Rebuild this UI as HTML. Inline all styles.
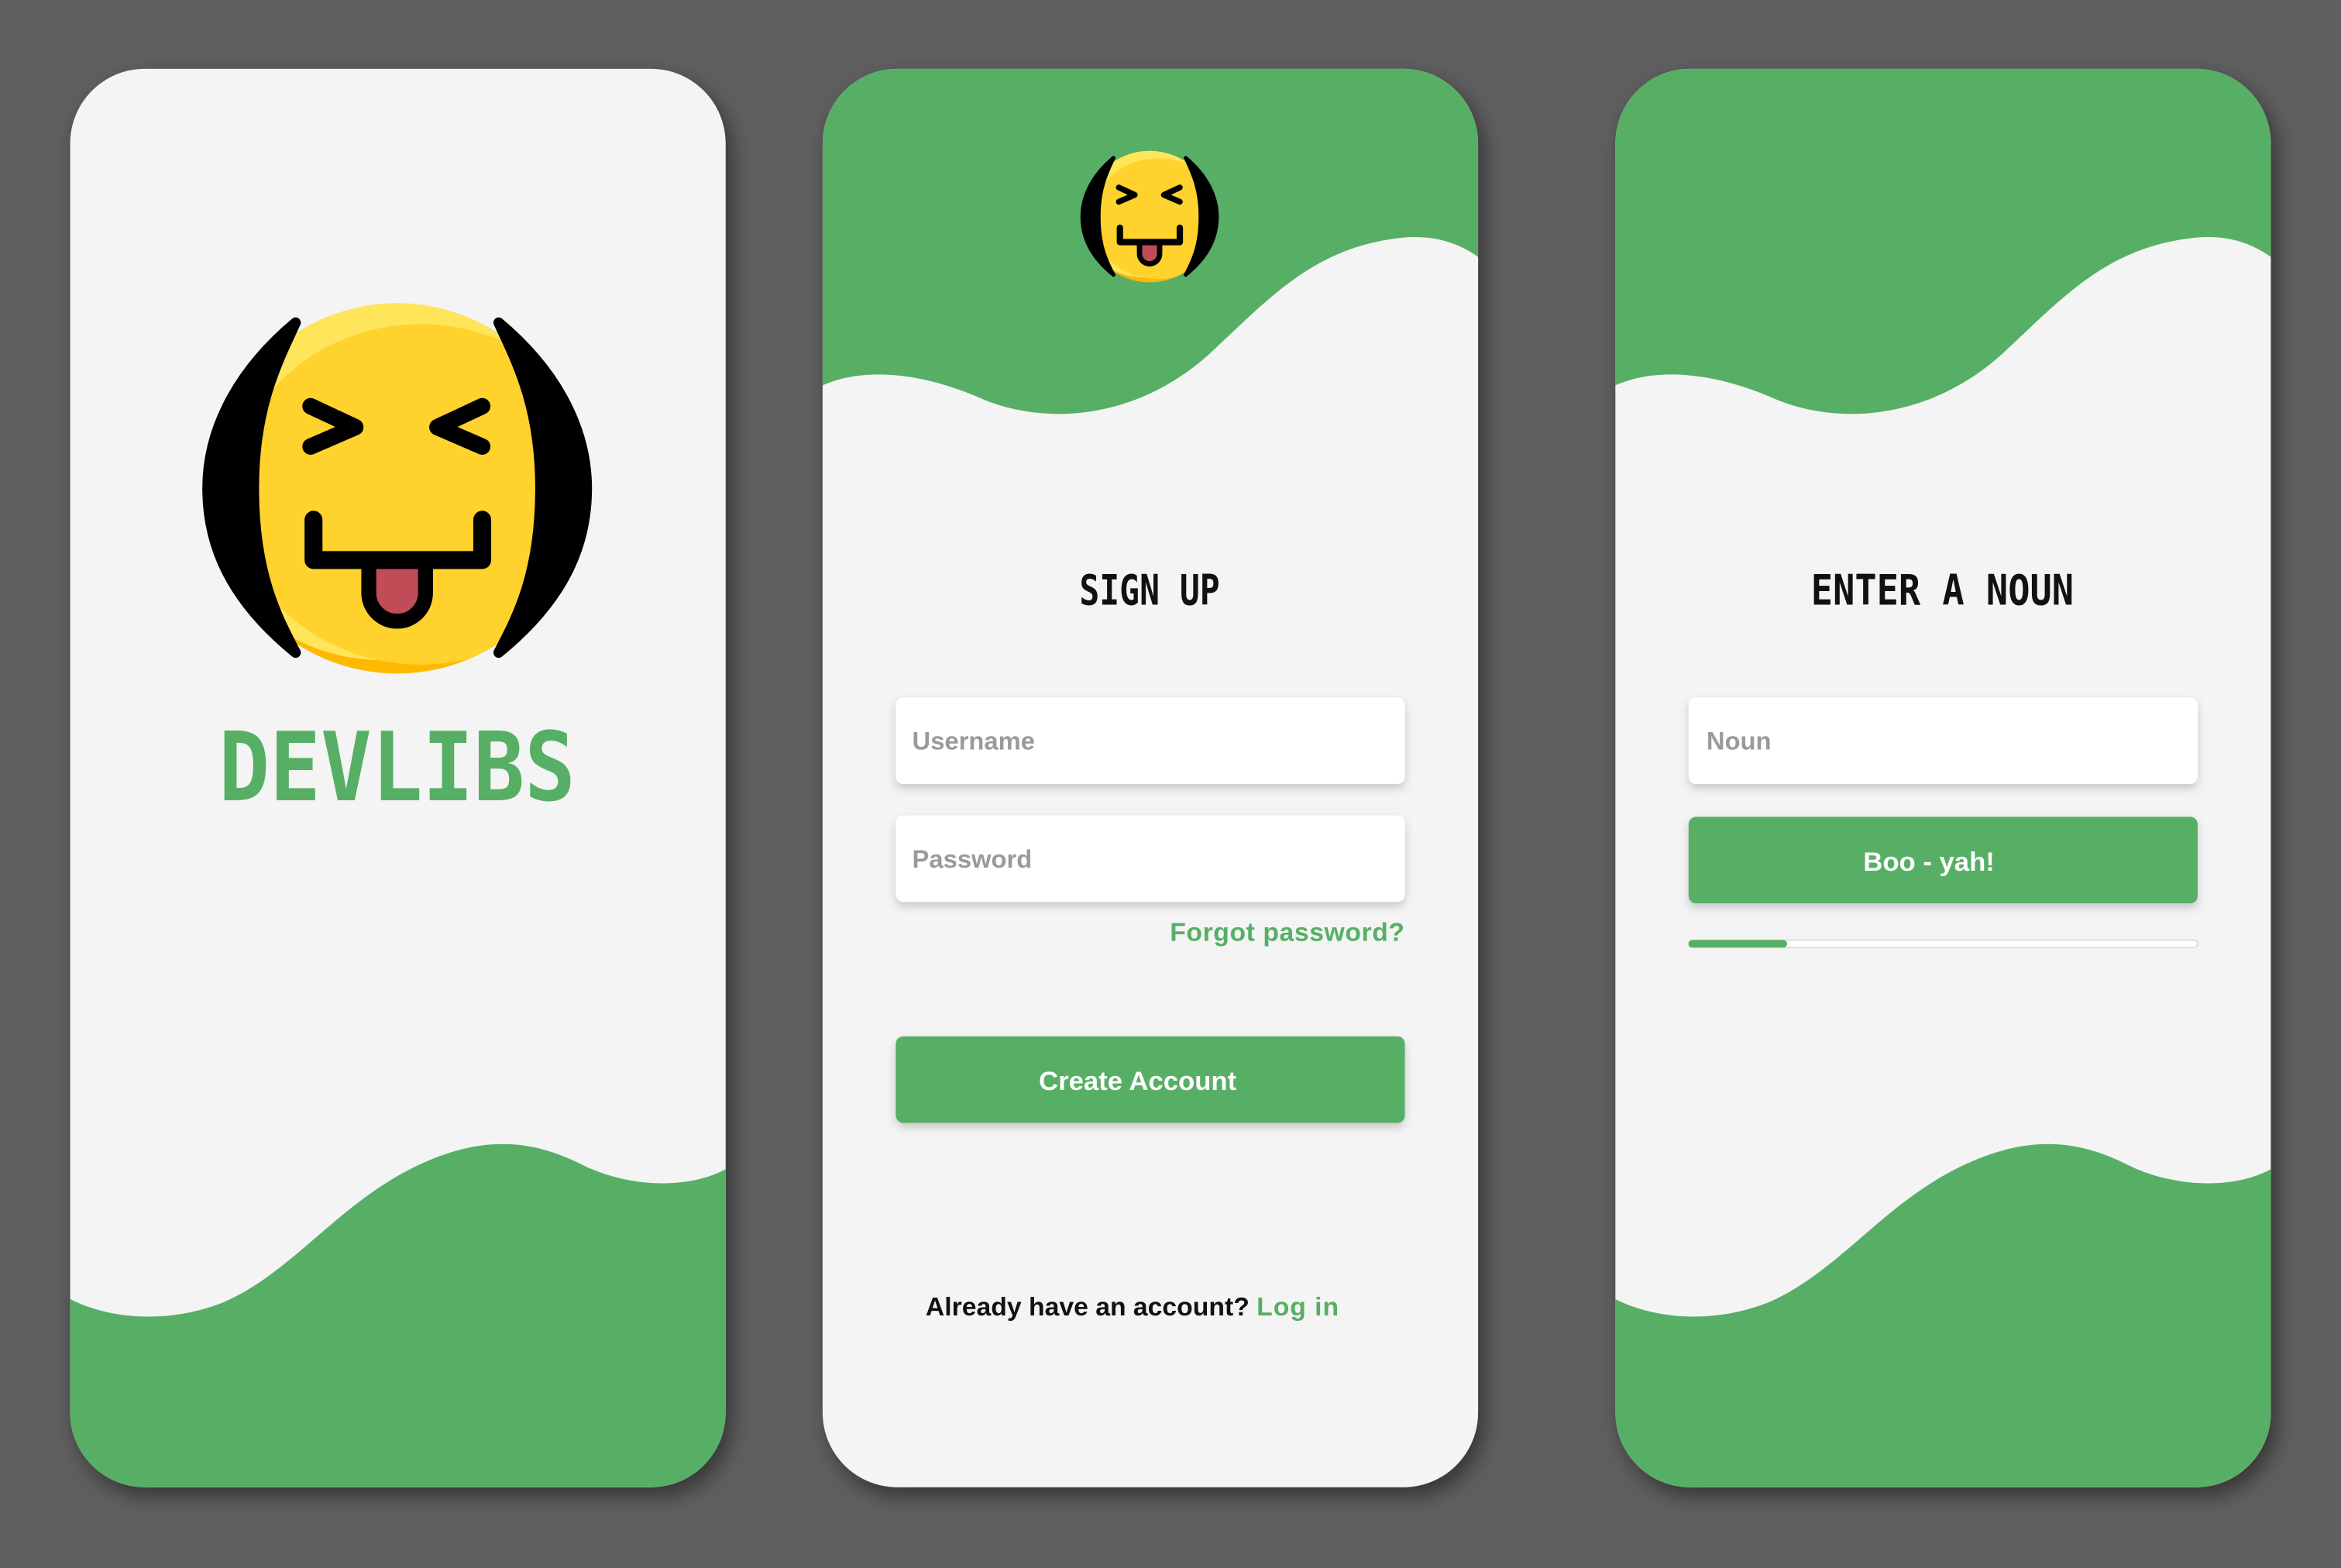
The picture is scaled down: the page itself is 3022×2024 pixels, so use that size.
<!DOCTYPE html>
<html><head><meta charset="utf-8"><style>
html,body{margin:0;padding:0;background:#5f5f5f;width:3022px;height:2024px;overflow:hidden}
svg{display:block}
</style></head><body>
<svg width="3022" height="2024" viewBox="0 0 1568 1050" xmlns="http://www.w3.org/2000/svg">
<defs>
<filter id="sh" x="-20%" y="-20%" width="140%" height="140%"><feDropShadow dx="4" dy="6" stdDeviation="7" flood-color="#000" flood-opacity="0.45"/></filter>
<filter id="sh2" x="-10%" y="-30%" width="120%" height="180%"><feDropShadow dx="0" dy="3" stdDeviation="3" flood-color="#000" flood-opacity="0.18"/></filter>
<clipPath id="c1"><rect x="47" y="46" width="439" height="950" rx="50"/></clipPath>
<clipPath id="c2"><rect x="551" y="46" width="439" height="950" rx="50"/></clipPath>
<clipPath id="c3"><rect x="1082" y="46" width="439" height="950" rx="50"/></clipPath>
<clipPath id="fc"><circle cx="266" cy="327" r="124"/></clipPath>
<g id="face">
  <circle cx="266" cy="327" r="124" fill="#FFB800"/>
  <g clip-path="url(#fc)">
    <ellipse cx="256" cy="318" rx="126" ry="124" fill="#FFE55A"/>
    <ellipse cx="282" cy="331" rx="126" ry="114" fill="#FFD22E"/>
  </g>
  <path d="M198,216 C155,252 139,292 139,327 C139,366 155,402 198,437 C186,414 170,385 170,327 C170,272 186,242 198,216 Z" fill="#000" stroke="#000" stroke-width="7" stroke-linejoin="round"/>
  <path d="M334,216 C377,252 393,292 393,327 C393,366 377,402 334,437 C346,414 362,385 362,327 C362,272 346,242 334,216 Z" fill="#000" stroke="#000" stroke-width="7" stroke-linejoin="round"/>
  <path d="M208,272 L238,286 L208,299" fill="none" stroke="#000" stroke-width="11" stroke-linecap="round" stroke-linejoin="round"/>
  <path d="M323,272 L293,286 L323,299" fill="none" stroke="#000" stroke-width="11" stroke-linecap="round" stroke-linejoin="round"/>
  <path d="M247,375 V397 A19,19 0 0 0 285,397 V375 Z" fill="#BF4C57"/>
  <path d="M247,375 V397 A19,19 0 0 0 285,397 V375" fill="none" stroke="#000" stroke-width="10"/>
  <path d="M210,348 V375 H323 V348" fill="none" stroke="#000" stroke-width="12" stroke-linecap="round" stroke-linejoin="round"/>
</g>
</defs>

<g filter="url(#sh)"><rect x="47" y="46" width="439" height="950" rx="50" fill="#F4F4F4"/></g>
<g clip-path="url(#c1)">
  <path d="M47,870 C70,882 110,888 150,872 C200,850 230,800 290,776 C330,760 360,765 390,780 C420,795 460,797 486,783 V996 H47 Z" fill="#56AF65"/>
</g>
<use href="#face"/>
<text x="266" y="536" text-anchor="middle" font-family="DejaVu Sans Mono, Liberation Mono, monospace" font-weight="bold" font-size="64" fill="#56AF65" textLength="239" lengthAdjust="spacingAndGlyphs">DEVLIBS</text>

<g filter="url(#sh)"><rect x="551" y="46" width="439" height="950" rx="50" fill="#F4F4F4"/></g>
<g clip-path="url(#c2)">
  <path d="M551,258 C580,245 620,250 660,268 C700,284 760,282 810,237 C850,200 880,165 940,159 C965,157 980,165 990,172 V46 H551 Z" fill="#56AF65"/>
</g>
<use href="#face" transform="translate(770,145) scale(0.355) translate(-266,-327)"/>
<text x="770" y="405" text-anchor="middle" font-family="DejaVu Sans Mono, Liberation Mono, monospace" font-weight="bold" font-size="28" fill="#111" textLength="94" lengthAdjust="spacingAndGlyphs">SIGN UP</text>
<g filter="url(#sh2)">
  <rect x="600" y="467" width="341" height="58" rx="5" fill="#fff"/>
  <rect x="600" y="546" width="341" height="58" rx="5" fill="#fff"/>
  <rect x="600" y="694" width="341" height="58" rx="5" fill="#56AF65"/>
</g>
<text x="611" y="502" font-family="Liberation Sans, sans-serif" font-weight="bold" font-size="17" fill="#9a9a9a">Username</text>
<text x="611" y="581" font-family="Liberation Sans, sans-serif" font-weight="bold" font-size="17" fill="#9a9a9a">Password</text>
<text x="941" y="630" text-anchor="end" font-family="Liberation Sans, sans-serif" font-weight="bold" font-size="17.5" letter-spacing="0.3" fill="#56AF65">Forgot password?</text>
<text x="762" y="730" text-anchor="middle" font-family="Liberation Sans, sans-serif" font-weight="bold" font-size="18" fill="#fff">Create Account</text>
<text x="620" y="881" font-family="Liberation Sans, sans-serif" font-weight="bold" font-size="17.5" fill="#111">Already have an account? <tspan fill="#56AF65" letter-spacing="0.5">Log in</tspan></text>

<g filter="url(#sh)"><rect x="1082" y="46" width="439" height="950" rx="50" fill="#F4F4F4"/></g>
<g clip-path="url(#c3)">
  <path d="M1082,258 C1111,245 1151,250 1191,268 C1231,284 1291,282 1341,237 C1381,200 1411,165 1471,159 C1496,157 1511,165 1521,172 V46 H1082 Z" fill="#56AF65"/>
  <path d="M1082,870 C1105,882 1145,888 1185,872 C1235,850 1265,800 1325,776 C1365,760 1395,765 1425,780 C1455,795 1495,797 1521,783 V996 H1082 Z" fill="#56AF65"/>
</g>
<text x="1301" y="405" text-anchor="middle" font-family="DejaVu Sans Mono, Liberation Mono, monospace" font-weight="bold" font-size="28" fill="#111" textLength="176" lengthAdjust="spacingAndGlyphs">ENTER A NOUN</text>
<g filter="url(#sh2)">
  <rect x="1131" y="467" width="341" height="58" rx="5" fill="#fff"/>
  <rect x="1131" y="547" width="341" height="58" rx="5" fill="#56AF65"/>
</g>
<text x="1143" y="502" font-family="Liberation Sans, sans-serif" font-weight="bold" font-size="17" fill="#9a9a9a">Noun</text>
<text x="1292" y="583" text-anchor="middle" font-family="Liberation Sans, sans-serif" font-weight="bold" font-size="18" fill="#fff">Boo - yah!</text>
<rect x="1131" y="629.5" width="341" height="5" rx="2.5" fill="#fff" stroke="#ddd" stroke-width="1"/>
<rect x="1131" y="629.5" width="66" height="5" rx="2.5" fill="#56AF65"/>
</svg>
</body></html>
